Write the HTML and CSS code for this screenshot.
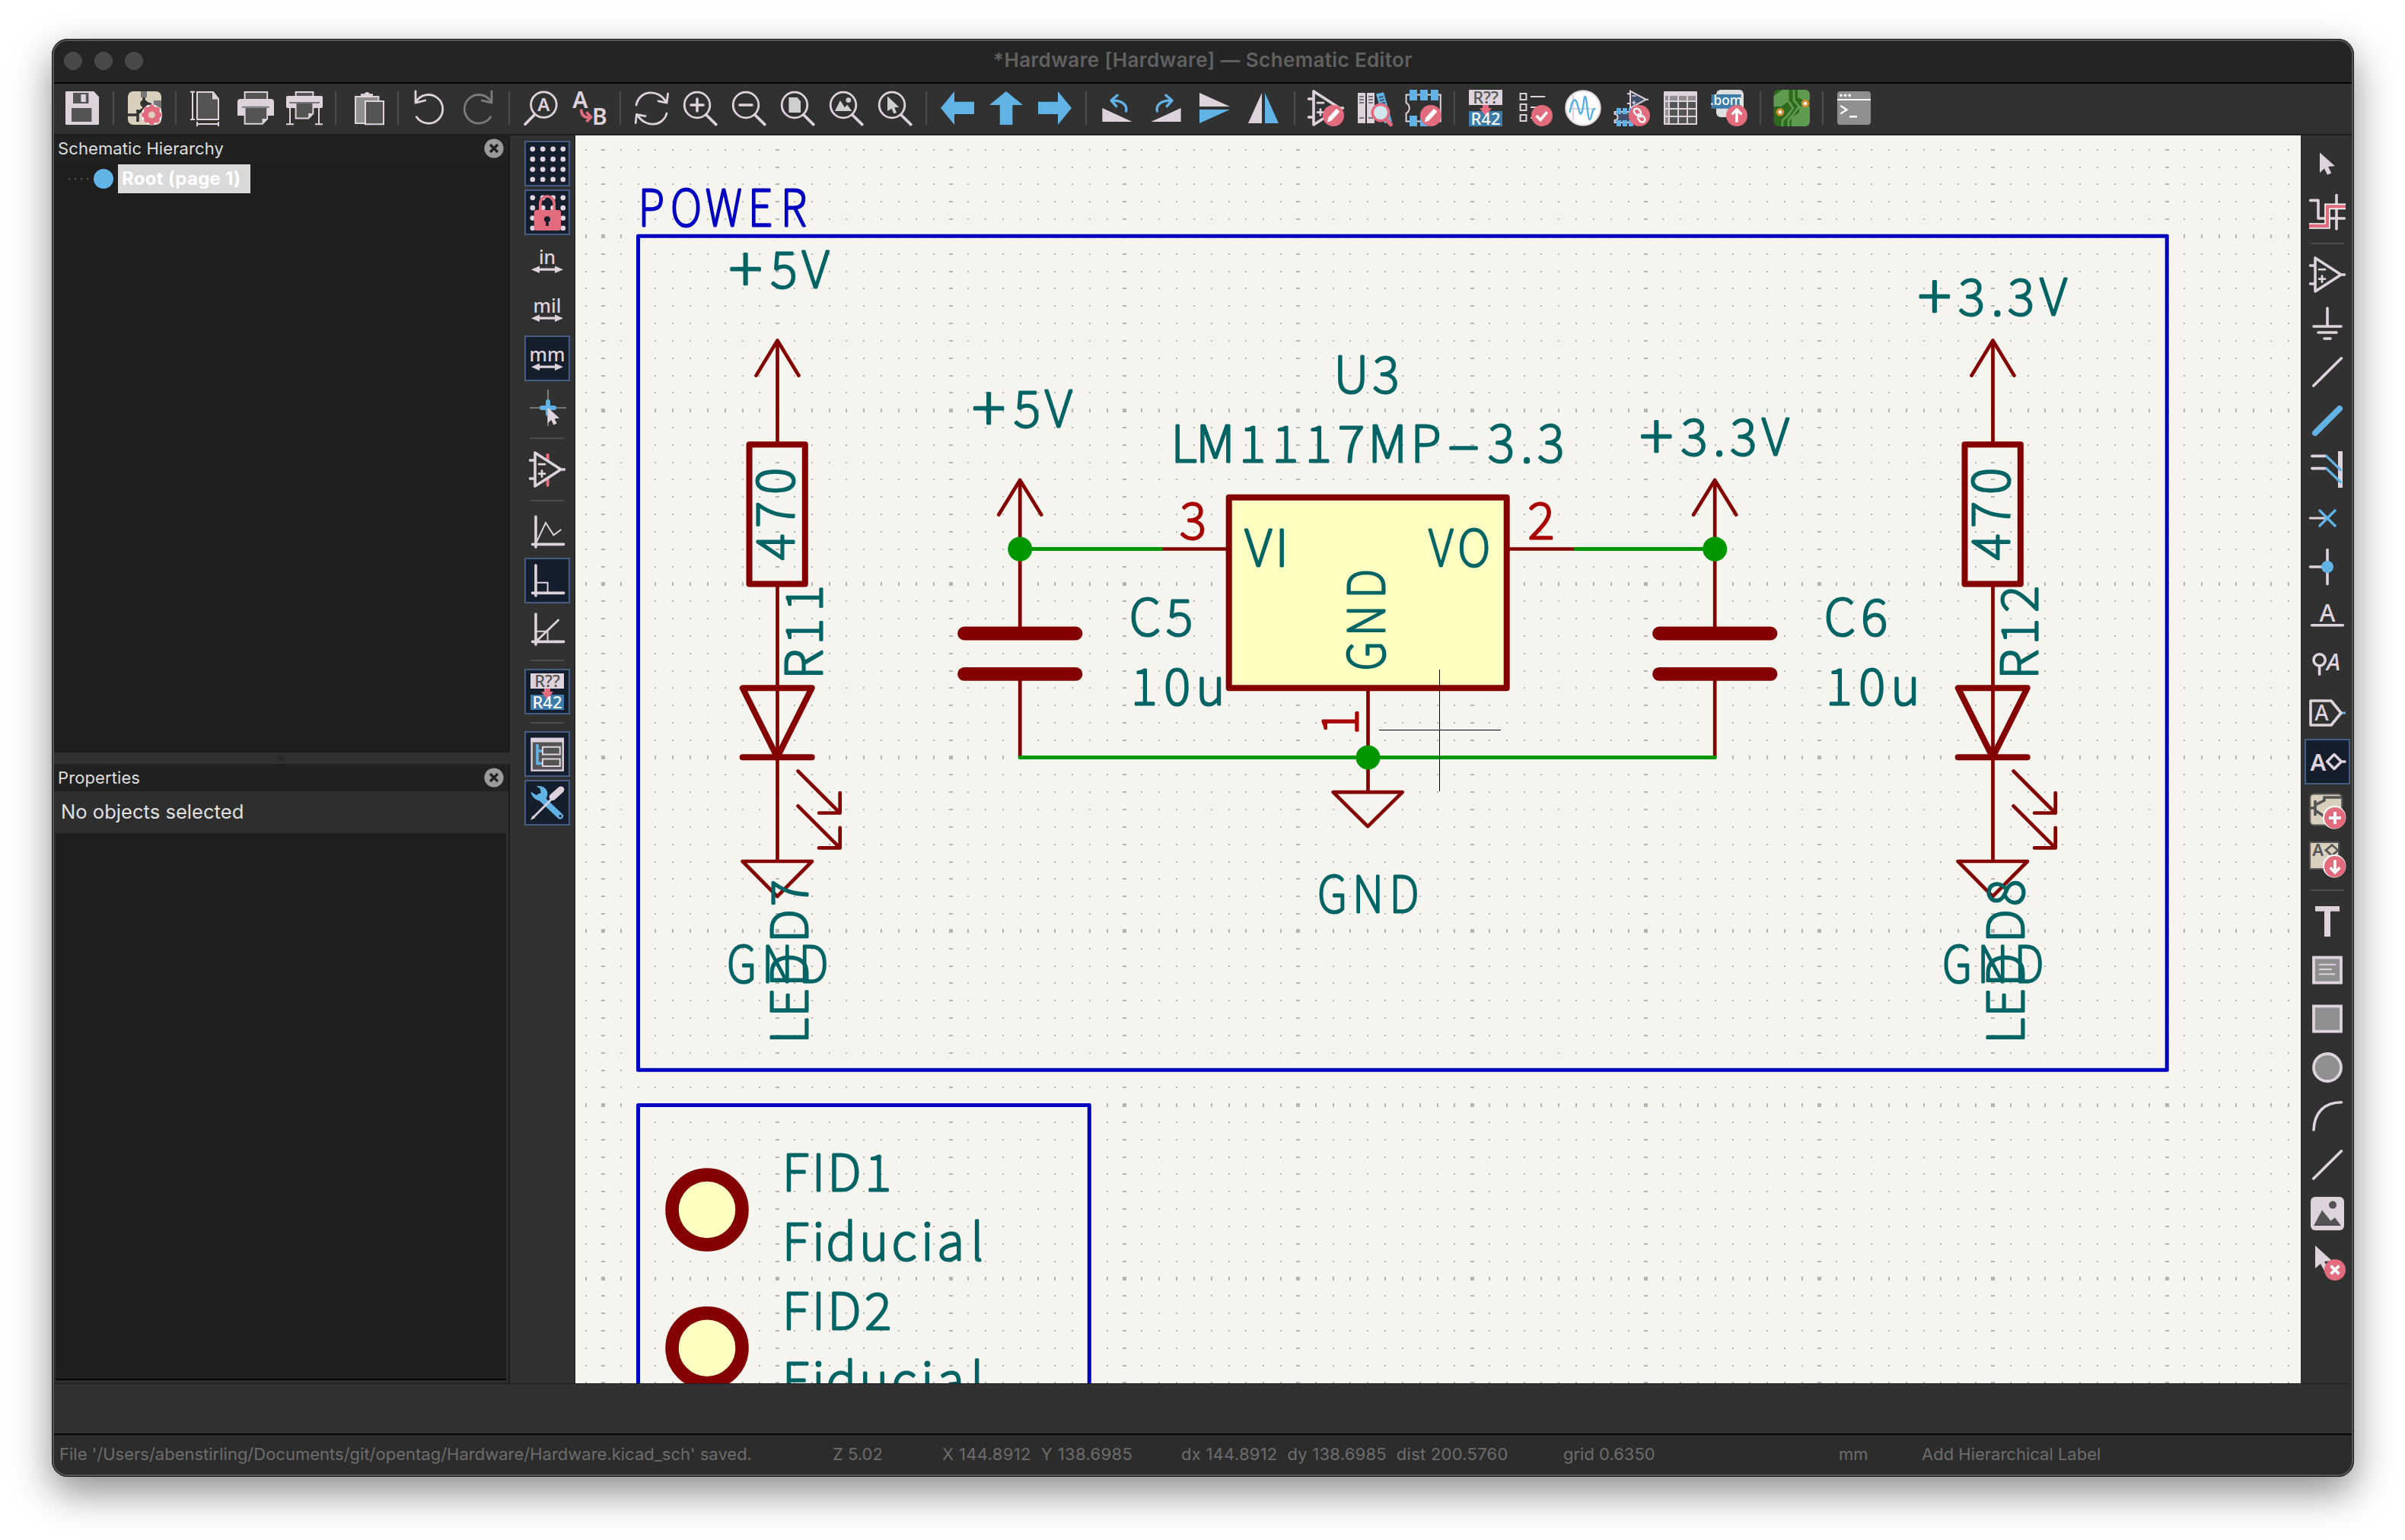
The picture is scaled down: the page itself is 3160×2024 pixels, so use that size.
FILE: index.html
```html
<!DOCTYPE html>
<html lang="en">
<head>
<meta charset="utf-8">
<title>Schematic Editor</title>
<link rel="stylesheet" href="styles.css">
</head>
<body>
<svg class="defs" width="0" height="0">
  <symbol id="opamp" viewBox="0 0 24 24"><path class="ln2" d="M4 1V23L21 12ZM.8 6H4M.8 18H4M20 12h3.2"/><path class="ln1" d="M6.5 8.6h4M6.5 14.8h4M8.5 12.8v4"/></symbol>
  <symbol id="lens" viewBox="0 0 24 24"><circle class="ln1" cx="10" cy="10" r="8.4"/><path class="ln2" d="M16 16.5 22.4 22.8"/></symbol>
  <symbol id="badge" viewBox="0 0 24 24"><circle class="red" cx="17" cy="17" r="7"/></symbol>
  <symbol id="pencil" viewBox="0 0 24 24"><circle class="red" cx="17" cy="17" r="7"/><path class="white" d="M13 21.3l.6-3L19 12.4l2.2 2L15.8 20.2z"/></symbol>
  <symbol id="dots" viewBox="0 0 24 24"><g class="light"><circle cx="2.4" cy="2.4" r="1.7"/><circle cx="9.1" cy="2.4" r="1.7"/><circle cx="15.8" cy="2.4" r="1.7"/><circle cx="22.4" cy="2.4" r="1.7"/><circle cx="2.4" cy="9.1" r="1.7"/><circle cx="9.1" cy="9.1" r="1.7"/><circle cx="15.8" cy="9.1" r="1.7"/><circle cx="22.4" cy="9.1" r="1.7"/><circle cx="2.4" cy="15.8" r="1.7"/><circle cx="9.1" cy="15.8" r="1.7"/><circle cx="15.8" cy="15.8" r="1.7"/><circle cx="22.4" cy="15.8" r="1.7"/><circle cx="2.4" cy="22.4" r="1.7"/><circle cx="9.1" cy="22.4" r="1.7"/><circle cx="15.8" cy="22.4" r="1.7"/><circle cx="22.4" cy="22.4" r="1.7"/></g></symbol>
  <symbol id="dim" viewBox="0 0 24 24"><path class="light" d="M1.5 17.6l5.5-2.4v1.6h10v-1.6l5.5 2.4-5.500 2.400V18.400H7V20z"/></symbol>
  <symbol id="close" viewBox="0 0 26 26"><circle cx="13" cy="13" r="12.6" fill="#9b9b9b"/><path d="M8 8l10 10M18 8L8 18" stroke="#212121" stroke-width="3.4"/></symbol>
</svg>

<div class="window">
  <header class="titlebar">
    <div class="lights"><i></i><i></i><i></i></div>
    <h1>*Hardware [Hardware] — Schematic Editor</h1>
  </header>

  <nav class="toolbar">
    <span class="btn"><svg viewBox="0 0 24 24"><path class="light" d="M1.6 1H19.6L23 4.6V22.4a.6.6 0 0 1-.6.6H1.6a.6.6 0 0 1-.6-.6V1.6a.6.6 0 0 1 .6-.6z"/><path class="dark" d="M6 2h10.2v7H6zM5 12h13.2v9H5z"/><path class="light" d="M11.2 3h3.2v5h-3.2z"/></svg></span>
    <i class="sep"></i>
    <span class="btn"><svg viewBox="0 0 24 24"><rect class="beige" x="1" y="1" width="22" height="22" rx="3.5"/><path d="M9.5 1h4v4h-4zM18 7h5v5h-5z" fill="#777"/><path d="M11.5 5v8M11.5 8l5 2M1 16.5h6M7.5 13v8M8 15l4-3" fill="none" stroke="#333" stroke-width="1.8"/><circle cx="11.5" cy="9" r="2.4" fill="#333"/><g stroke="#fff" stroke-width="4.4" stroke-linejoin="round"><circle cx="16.7" cy="16.5" r="4.6" fill="none"/><path d="M16.7 10.5v12M10.7 16.5h12M12.5 12.3l8.4 8.4M20.9 12.3l-8.4 8.4" stroke-width="3.4"/></g><g stroke="#e26b7d"><circle cx="16.7" cy="16.5" r="4" fill="#d9cfbd" stroke-width="3.4"/><path d="M16.7 10v2.6M16.7 20.4v2.6M10.2 16.5h2.6M20.6 16.5h2.6M12.1 11.9l1.8 1.8M19.5 19.3l1.8 1.8M21.3 11.9l-1.8 1.8M13.9 19.3l-1.8 1.8" stroke-width="2.8"/></g></svg></span>
    <i class="sep"></i>
    <span class="btn"><svg viewBox="0 0 24 24"><path d="M5.5 1.5H16L19.5 6V19.5H5.5z" fill="#545454" stroke="#ded3dd"/><path class="light" d="M15.5 1.5V6.3H19.7z"/><path class="ln" d="M1 1.4h3M2.5 1.4v18M1 19.5h3M5.5 22.5h14M5.5 21v3M19.5 21v3"/></svg></span>
    <span class="btn"><svg viewBox="0 0 24 24"><path d="M4.8 1.5h14.8V8H4.8z" fill="#545454" stroke="#ded3dd"/><path class="light" d="M2 6h20a2 2 0 0 1 2 2v9H0V8a2 2 0 0 1 2-2z"/><path d="M4.8 11.5h14.8v7.5l-3.2 3.4H4.8z" fill="#545454" stroke="#ded3dd"/><path d="M3 11.4h18" stroke="#777"/><path class="light" d="M16.2 19h3.6l-3.4 3.5z"/></svg></span>
    <span class="btn"><svg viewBox="0 0 24 24"><path d="M6.3 1.5h11.4V6H6.3z" fill="#545454" stroke="#ded3dd"/><rect class="light" y="4" width="24" height="8" rx="1"/><path d="M6.3 8.5h11.4v7l-3 3.2H6.3z" fill="#545454" stroke="#ded3dd"/><path d="M2 8.5h20" stroke="#777"/><path class="light" d="M14.5 15.5H18l-3.3 3.4z"/><path class="ln" d="M2.5 12v11M21.5 12v11M0 22.6h5M19 22.6h5"/></svg></span>
    <i class="sep"></i>
    <span class="btn"><svg viewBox="0 0 24 24"><path d="M4.5 4.5h15.2V22H4.5z" fill="#8f8f8f" stroke="#ded3dd"/><path class="light" d="M8 5V2.6h2.3a2 2 0 0 1 3.6 0H16V5z"/><path d="M11 7.5h12V22.6H11z" fill="#545454" stroke="#ded3dd"/></svg></span>
    <i class="sep"></i>
    <span class="btn"><svg viewBox="0 0 24 24"><path class="ln1" d="M3 .9V8.600L9.400 7M3.200 8.200A9.400 9.400 0 1 1 3.600 17.800"/></svg></span>
    <span class="btn off"><svg viewBox="0 0 24 24"><path class="ln1" d="M21 .9V8.600L14.600 7M20.800 8.200A9.400 9.400 0 1 0 20.400 17.800"/></svg></span>
    <i class="sep"></i>
    <span class="btn"><svg viewBox="0 0 24 24"><circle class="ln1" cx="14.2" cy="9.8" r="8.4"/><path class="ln2" d="M8.3 16.2 2 22.6"/><text class="ic b" x="14.2" y="14" font-size="12">A</text></svg></span>
    <span class="btn"><svg viewBox="0 0 24 24"><text class="ic b" x="6.2" y="12" font-size="15">A</text><text class="ic b" x="19" y="23" font-size="15">B</text><path d="M6.8 12.8c0 3.6 1.6 5.4 5 5.4M10.3 14.6l3 3.4-3 3" fill="none" stroke="#e26b7d" stroke-width="1.8"/></svg></span>
    <i class="sep"></i>
    <span class="btn"><svg viewBox="0 0 24 24"><path class="ln1" d="M2 10C4 .2 16.5-1 21.5 8M22.8 2.6 22 8.6 16.5 7.4M22 15.5C19.5 24.5 7.5 25 2.8 16.5M1.6 21.8 2.2 16.2 8 17.3"/></svg></span>
    <span class="btn"><svg viewBox="0 0 24 24"><use href="#lens"/><path class="ln2" d="M6 10h8M10 6v8"/></svg></span>
    <span class="btn"><svg viewBox="0 0 24 24"><use href="#lens"/><path class="ln2" d="M6 10h8"/></svg></span>
    <span class="btn"><svg viewBox="0 0 24 24"><use href="#lens"/><path fill="#cfcfcf" d="M6.2 5h5.6L14 7.6V15H6.2z"/></svg></span>
    <span class="btn"><svg viewBox="0 0 24 24"><use href="#lens"/><path fill="#cfcfcf" d="M4.5 14 8 7l3 4.6 1.6-1.8 3 4.2z"/><circle cx="13.4" cy="6.8" r="1.7" fill="#cfcfcf"/></svg></span>
    <span class="btn"><svg viewBox="0 0 24 24"><use href="#lens"/><path fill="#cfcfcf" d="M7 4.2 14.6 11.4 11.6 11.6 13 15 11.2 15.8 9.8 12.4 7 14z"/></svg></span>
    <i class="sep"></i>
    <span class="btn"><svg viewBox="0 0 24 24"><path class="blue" d="M1 12 10 1V7.9H23V16H10V23z"/></svg></span>
    <span class="btn"><svg viewBox="0 0 24 24"><path class="blue" d="M12 1 23 10H16.2V23H7.9V10H1z"/></svg></span>
    <span class="btn"><svg viewBox="0 0 24 24"><path class="blue" d="M23 12 14 1V7.9H1V16H14V23z"/></svg></span>
    <i class="sep"></i>
    <span class="btn"><svg viewBox="0 0 24 24"><path class="light" d="M2.2 12 21.8 21H2.2z"/><path class="bl2" d="M17.8 14C18.6 9.5 14.8 7 8.4 7M12 3.6 8 7l3.4 3.8"/></svg></span>
    <span class="btn"><svg viewBox="0 0 24 24"><path class="light" d="M21.8 12 2.2 21H21.8z"/><path class="bl2" d="M6.2 14C5.4 9.5 9.2 7 15.6 7M12 3.6 16 7l-3.4 3.8"/></svg></span>
    <span class="btn"><svg viewBox="0 0 24 24"><path class="light" d="M2 2 22 11H2z"/><path class="blue" d="M2 13H22L2 22z"/></svg></span>
    <span class="btn"><svg viewBox="0 0 24 24"><path class="light" d="M2 22 11 2V22z"/><path class="blue" d="M13 2 22 22H13z"/></svg></span>
    <i class="sep"></i>
    <span class="btn"><svg viewBox="0 0 24 24"><use href="#opamp"/><use href="#pencil"/></svg></span>
    <span class="btn"><svg viewBox="0 0 24 24"><path class="light" d="M1 2h5v20H1zM7 2h5v20H7z"/><path d="M2 4.5h3M2 6.5h3M2 8.5h3M2 18.5h3M8 4.5h3M8 6.5h3M8 8.5h3M8 18.5h3" stroke="#777"/><path class="blue" d="M13 2.8 18 1.6 23.5 21 18.5 22z"/><path d="M14.8 5.2l3-.8M15.4 7.2l3-.8M16 9.2l3-.8" stroke="#41506b"/><path d="M20 19.8 22.7 22.8" stroke="#e26b7d" stroke-width="2.6" stroke-linecap="round"/><circle cx="16" cy="15" r="5.4" fill="#cfe6ec" stroke="#e26b7d" stroke-width="1.7"/></svg></span>
    <span class="btn"><svg viewBox="0 0 24 24"><path class="ln" d="M.8 3.3H23.4V20.7H.8V15.5A4 4 0 0 0 .8 8.5z"/><path class="blue" d="M3 0h5v7H3zM10 0h5v7h-5zM17 0h5v7h-5zM3 17h5v7H3zM10 17h5v7h-5z"/><use href="#pencil"/></svg></span>
    <i class="sep"></i>
    <span class="btn"><svg viewBox="0 0 24 24"><path class="light" d="M1 0h22v10H1z"/><path fill="#3b7cab" d="M1 14h22v10H1z"/><text class="ic" x="12" y="9" font-size="11" fill="#545454">R??</text><path class="red" d="M10 10h4v2h2L12 17.4 8 12h2z"/><text class="ic w" x="12" y="23" font-size="11">R42</text></svg></span>
    <span class="btn"><svg viewBox="0 0 24 24"><path class="ln" d="M2.8 2.5H6.7V6.5H2.8zM2.8 9.5H6.7v4H2.8zM2.8 16.5H6.7v4H2.8zM9.5 4.5h9.6M9.5 11.5h5M9.5 18.5h3"/><use href="#badge"/><path d="M13.4 17l2.6 2.8 4.4-5.2" fill="none" stroke="#fff" stroke-width="1.8"/></svg></span>
    <span class="btn"><svg viewBox="0 0 24 24"><circle cx="12" cy="12" r="11.4" fill="#fff" stroke="#ded3dd"/><path d="M5.5 3.5v16.5M3 12.5h17" stroke="#ded3dd"/><path d="M3.4 14.5C5 5 7.2 5 8.4 10s2 8.500 3.300 3 .600-8.500 1.700-8.500 1.600 15 3 15 1.300-7.500 3.400-7" fill="none" stroke="#55b0e6" stroke-width="1.200" stroke-linecap="round"/></svg></span>
    <span class="btn"><svg viewBox="0 0 24 24"><path d="M11 .8V12L21.400 6.400zM9 2.600h2M9 9h2M21 6.400h2" fill="#41506b" stroke="#ded3dd"/><path d="M12.200 4h2.500M12.200 8.500h2.500M13.400 7.300v2.400" stroke="#ded3dd" stroke-width=".8"/><path d="M.8 14.500H13V21.500H.8v-1.500a2 2 0 0 0 0-4z" fill="#41506b" stroke="#ded3dd"/><path class="blue" d="M2 12h3v4H2zM6 12h3v4H6zM10 12h3v4h-3zM2 20h3v4H2zM6 20h3v4H6zM10 20h3v4h-3z"/><use href="#badge"/><g fill="none" stroke="#fff" stroke-width="1.200"><rect x="13.200" y="12.800" width="5" height="3.600" rx="1.800" transform="rotate(45 15.700 14.600)"/><rect x="15.900" y="17.200" width="5" height="3.600" rx="1.800" transform="rotate(45 18.400 19)"/><path d="M16 15.600l2.200 2.600"/></g></svg></span>
    <span class="btn"><svg viewBox="0 0 24 24"><rect class="light" x="1" y="1" width="22" height="22" rx=".5"/><path d="M2 4h2v3H2zM5 4h5v3H5zM11 4h5v3h-5zM17 4h5v3h-5zM2 8h2v4H2zM2 13h2v4H2zM2 18h2v4H2z" fill="#8f8f8f"/><path class="dark" d="M5 8h5v4H5zM11 8h5v4h-5zM17 8h5v4h-5zM5 13h5v4H5zM11 13h5v4h-5zM17 13h5v4h-5zM5 18h5v4H5zM11 18h5v4h-5zM17 18h5v4h-5z"/></svg></span>
    <span class="btn"><svg viewBox="0 0 24 24"><rect x="3.500" y="0" width="18" height="18" rx="3" fill="#e0dfe0"/><path fill="#3b7cab" d="M.3 3H19.800V12.400H.3z"/><text class="ic w" x="10" y="10.200" font-size="8.600">.bom</text><use href="#badge"/><path d="M17 21.400v-8M13.800 16.200 17 13l3.200 3.200" fill="none" stroke="#fff" stroke-width="1.700"/></svg></span>
    <i class="sep"></i>
    <span class="btn"><svg viewBox="0 0 24 24"><rect x=".3" y="0" width="23.700" height="24" rx="3" fill="#2d6a1c"/><path d="M16 0h5a3 3 0 0 1 3 3v4h-4l-4-2zM17 11h7v10a3 3 0 0 1-3 3H12v-6l5-3zM.3 4v7h5l4-3V0H6z" fill="#5e9a50"/><path d="M9.500 0v7L13 12 9 17.500 6 20v4M13.500 0v7l3.500 4-7 9v4" fill="none" stroke="#5e9a50" stroke-width="1.400"/><circle cx="21" cy="9" r="1.900" fill="#fff" stroke="#d28d33" stroke-width="1.500"/><circle cx="4.500" cy="14.600" r="1.900" fill="#fff" stroke="#d28d33" stroke-width="1.500"/></svg></span>
    <i class="sep"></i>
    <span class="btn"><svg viewBox="0 0 24 24"><rect x="1" y="1" width="22" height="22" rx="2" fill="#8f8f8f"/><path d="M1 6.500h22" stroke="#fff" stroke-width="1"/><g fill="#fff"><circle cx="3.500" cy="3.700" r=".9"/><circle cx="6.300" cy="3.700" r=".9"/><circle cx="9.100" cy="3.700" r=".9"/></g><path d="M3.200 10.500l4 2.600-4 2.600M9 17.600h5" fill="none" stroke="#fff" stroke-width="1.200"/></svg></span>
  </nav>

  <main class="main">
    <aside class="side">
      <section class="panel hierarchy">
        <h2>Schematic Hierarchy<svg><use href="#close"/></svg></h2>
        <div class="tree"><span class="branch"></span><span class="node"></span><b>Root (page 1)</b></div>
      </section>
      <div class="sash"><i></i></div>
      <section class="panel props">
        <h2>Properties<svg><use href="#close"/></svg></h2>
        <p>No objects selected</p>
        <div class="box"></div>
      </section>
    </aside>

    <nav class="rail left">
      <span class="btn on"><svg viewBox="0 0 24 24"><use href="#dots"/></svg></span>
      <span class="btn on"><svg viewBox="0 0 24 24"><use href="#dots"/><path d="M7.400 11V6.500a4.600 5 0 0 1 9.200 0V11" fill="none" stroke="#e26b7d" stroke-width="1.800"/><rect class="red" x="3.400" y="10.500" width="17.600" height="13.500" rx="1.500"/><path fill="#151e2d" d="M12 14.600a2 2 0 0 1 .9 3.800V21h-1.800v-2.600a2 2 0 0 1 .9-3.800z"/></svg></span>
      <span class="btn"><svg viewBox="0 0 24 24"><text class="ic" x="12" y="14" font-size="12.400">in</text><use href="#dim"/></svg></span>
      <span class="btn"><svg viewBox="0 0 24 24"><text class="ic" x="12" y="14" font-size="12.400">mil</text><use href="#dim"/></svg></span>
      <span class="btn on"><svg viewBox="0 0 24 24"><text class="ic" x="12" y="14" font-size="12.400">mm</text><use href="#dim"/></svg></span>
      <span class="btn"><svg viewBox="0 0 24 24"><path d="M.5 12.500h24M12.500.5v24" stroke="#8f8f8f" stroke-width=".8"/><path d="M8.500 12.500h8M12.500 8.500v8" stroke="#62b3e5" stroke-width="3" stroke-linecap="round"/><path class="light" d="M12.300 12.300 20 19.200 16.800 19.600 18.300 22.800 16.200 23.800 14.600 20.400 12.300 22.800z"/></svg></span>
      <i class="sep"></i>
      <span class="btn"><svg viewBox="0 0 24 24"><path d="M12.300 2.400v20" stroke="#e26b7d" stroke-width="2" stroke-linecap="round"/><path d="M4 1V23L21 12z" fill="#313131"/><use href="#opamp"/></svg></span>
      <i class="sep"></i>
      <span class="btn"><svg viewBox="0 0 24 24"><path class="ln2" d="M4.500 2v20M2.300 20.200h20.500"/><path class="ln" d="M5 18.700 11 6l5.200 8.200 5-3.700"/></svg></span>
      <span class="btn on"><svg viewBox="0 0 24 24"><path class="ln2" d="M4.500 2v20M2.300 20.200h20.500"/><path class="ln" d="M5 13.400h7.300v7"/></svg></span>
      <span class="btn"><svg viewBox="0 0 24 24"><path class="ln2" d="M4.500 2v20M2.300 20.200h20.500"/><path class="ln" d="M5 13.400h7.300v7"/><path class="ln1" d="M5 19.700 19.300 6"/></svg></span>
      <i class="sep"></i>
      <span class="btn on"><svg viewBox="0 0 24 24"><path class="light" d="M1 0h22v10H1z"/><path fill="#3b7cab" d="M1 14h22v10H1z"/><text class="ic" x="12" y="9" font-size="11" fill="#545454">R??</text><path class="red" d="M10 10h4v2h2L12 17.400 8 12h2z"/><text class="ic w" x="12" y="23" font-size="11">R42</text></svg></span>
      <i class="sep"></i>
      <span class="btn on"><svg viewBox="0 0 24 24"><path d="M1.800 2h20.600v20.800H1.800z" fill="#545454" stroke="#ded3dd" stroke-width="1.200"/><path class="light" d="M1.200 1.400h21.800v2.800H1.200z"/><path d="M5.500 5.500v12.700H9M5.500 10H9" fill="none" stroke="#62b3e5" stroke-width="1.800"/><path class="ln" d="M9 7.400h11.400v4.800H9zM9 15.200h11.400V20H9z"/></svg></span>
      <span class="btn on"><svg viewBox="0 0 24 24"><path d="M7 8 20.500 20.800" stroke="#62b3e5" stroke-width="4" stroke-linecap="round"/><path class="blue" d="M1.200 4.800l4 2.400 2.600-1.400-.4-3L5 1.200c3.500-1 7 1.200 7.200 4.600.1 2-.6 3.200-1.800 4.200-2.600 2-8.200.3-9.200-5.200z"/><circle cx="20.600" cy="20.800" r=".9" fill="#151e2d"/><path class="ln1" d="M15 9.500 3.500 21"/><path class="light" d="M1 23.400l1.500-3 1.600 1.600z"/><path d="M15.500 8.300 21 3.400" stroke="#ded3dd" stroke-width="4.400" stroke-linecap="round"/></svg></span>
    </nav>

    <svg class="canvas" viewBox="756 178 2267 1640">
      <path id="grid" class="grid"/>
      <g class="note"><path d="M838.500 310.300H2847.200V1406.300H838.500zM838.500 1452.500H1431.300V1900H838.500z"/></g>
      <g id="branch" class="sym">
        <path d="M1021.500 447.500V584M993.500 493.600l28-46.100 28 46.100M1021.500 768V1132M1048.600 1013.500l55 55M1103.700 1042v26.500h-27.600M1048.600 1059.300l55 55M1103.700 1087.900v26.500h-27.600M975.600 1132h91.400l-45.700 46.200z"/>
        <path class="thick" d="M984.500 584.200h73.300v183.400h-73.300zM975.700 904.300h91l-45.500 91zM975.700 995.300h91"/>
      </g>
      <use href="#branch" x="1597"/>
      <g id="cap" class="sym">
        <path d="M1340.200 631V832M1340.200 886V995M1312.200 676.600l28-45.600 28 45.600"/>
        <path class="plate" d="M1267 832.500h146.500M1267 885.900h146.500"/>
      </g>
      <use href="#cap" x="913"/>
      <g class="sym"><path d="M1525 721.500h90M1980 721.500h91M1797.500 904V1041M1751.700 1041.200h91l-45.500 45z"/><path class="thick body" d="M1614.700 653.700h365v250.500h-365z"/>
        <circle class="body ring" cx="929" cy="1590" r="46"/><circle class="body ring" cx="929" cy="1771.700" r="46"/></g>
      <path class="wire" d="M1340.200 721.500H1525.500M2070.500 721.500H2253.200M1340.200 995.400H2253.200"/>
      <g class="dot"><circle cx="1340.200" cy="721.600" r="16"/><circle cx="2253.200" cy="721.600" r="16"/><circle cx="1797.500" cy="995.500" r="16"/></g>

      <g class="stroke note-t"><text transform="scale(.86 1)" y="297" x="995 1048.400 1105.800 1161.600 1212.500">POWER</text></g>
      <g class="stroke ref">
        <text y="378.100" x="979.700 1029.900 1071.500"><tspan class="plus" dy="6">+</tspan><tspan dy="-6">5</tspan>V</text>
        <text y="560.600" x="1299.100 1349.400 1390.700"><tspan class="plus" dy="6">+</tspan><tspan dy="-6">5</tspan>V</text>
        <text y="597.800" x="2176.500 2226 2259.200 2290.800 2332.700"><tspan class="plus" dy="6">+</tspan><tspan dy="-6">3</tspan>.3V</text>
        <text y="413.900" x="2542 2590.400 2624.300 2655.500 2698"><tspan class="plus" dy="6">+</tspan><tspan dy="-6">3</tspan>.3V</text>
        <text y="515.700" x="1775.500 1820.900">U3</text>
        <text y="606.700" x="1555.500 1596.800 1645.500 1688.800 1732.100 1775.500 1823.200 1873.500">LM1117MP</text>
        <text transform="translate(1923 606.700) scale(2 1)" x="0">-</text>
        <text y="606.700" x="1972.400 2006.100 2037.800">3.3</text>
        <text y="743.700" x="1653.300 1684.200">VI</text>
        <text transform="translate(1915 743.700) scale(.9 1)" x="-24 24">VO</text>
        <text transform="rotate(-90) translate(-815 1819.400) scale(.88 1)" x="-53.800 -1 54.300">GND</text>
        <text transform="translate(1797.400 1199.200) scale(.88 1)" x="-53.300 0 54">GND</text>
        <text y="834.500" x="1504.400 1549.700">C5</text>
        <text y="926.300" x="1503.200 1546.800 1590.500">10u</text>
        <text y="834.500" x="2417.400 2462.700">C6</text>
        <text y="926.300" x="2416.200 2459.800 2503.500">10u</text>
        <text transform="rotate(-90)" y="1042.500" x="-718.900 -676.400 -632.200">470</text>
        <text transform="rotate(-90)" y="1079.800" x="-873.300 -830.200 -786.600">R11</text>
        <text transform="rotate(-90)" y="1061.400" x="-1355 -1318 -1275">LED</text>
        <text transform="rotate(-90)" y="1061.400" x="-1217.200 -1173.600">D7</text>
        <text transform="translate(1021.400 1290.800) scale(.88 1)" x="-53.300 0 54">GND</text>
        <text transform="rotate(-90)" y="2640" x="-718.900 -676.400 -632.200">470</text>
        <text transform="rotate(-90)" y="2677.200" x="-873.300 -830.200 -787.200">R12</text>
        <text transform="rotate(-90)" y="2659" x="-1355 -1318 -1275">LED</text>
        <text transform="rotate(-90)" y="2659" x="-1217.200 -1173.300">D8</text>
        <text transform="translate(2618.400 1290.800) scale(.88 1)" x="-53.300 0 54">GND</text>
        <text y="1565.200" x="1045 1075.400 1109.400 1153.600">FID1</text>
        <text y="1656.300" x="1045 1075.400 1105.400 1148.200 1188 1218.300 1249.100 1284">Fiducial</text>
        <text y="1747.400" x="1045 1075.400 1109.400 1153.600">FID2</text>
        <text y="1838.700" x="1045 1075.400 1105.400 1148.200 1188 1218.300 1249.100 1284">Fiducial</text>
      </g>
      <g class="stroke pin">
        <text y="707.600" x="1567.500">3</text><text y="707.600" x="2025">2</text>
        <text transform="rotate(-90)" y="1783.700" x="-949.200">1</text>
      </g>
      <path class="cursor" d="M1812 959.500h160M1891.500 880v160"/>
    </svg>

    <nav class="rail right">
      <span class="btn"><svg viewBox="0 0 24 24"><path class="light" d="M7 4.700 17 13.600 12.600 14l2 4.200-2.600 1.200-2-4.200L7 18z"/></svg></span>
      <span class="btn"><svg viewBox="0 0 24 24"><path class="ln2" d="M.8 4.200H6V16H23.200M18 .8V23"/><path d="M0 21H12V8.200H24" fill="none" stroke="#fff" stroke-width="3.800"/><path d="M0 21H12V8.200H24" fill="none" stroke="#e26b7d" stroke-width="2.200"/></svg></span>
      <i class="sep"></i>
      <span class="btn"><svg viewBox="0 0 24 24"><use href="#opamp"/></svg></span>
      <span class="btn"><svg viewBox="0 0 24 24"><path class="ln2" d="M12 2v12M3 14h18M6 18h12M10 22h4"/></svg></span>
      <span class="btn"><svg viewBox="0 0 24 24"><path class="ln2" d="M2.900 21 21.200 2.900"/></svg></span>
      <span class="btn"><svg viewBox="0 0 24 24"><path d="M4 20 20 4" stroke="#62b3e5" stroke-width="4" stroke-linecap="round"/></svg></span>
      <span class="btn"><svg viewBox="0 0 24 24"><path class="light" d="M19 0h3v24h-3z"/><path class="ln2" d="M1.900 3.200H11M1.900 11.300H11"/><path class="bl2" d="M11.300 3.200 20.700 12.300M11.300 11.300 20.700 20.400"/></svg></span>
      <span class="btn"><svg viewBox="0 0 24 24"><path class="ln1" d="M.6 12H12"/><path class="bl2" d="M7 7l10 10M17 7 7 17"/></svg></span>
      <span class="btn"><svg viewBox="0 0 24 24"><path class="ln2" d="M.8 12H12M12 .8V23.200"/><circle class="blue" cx="12" cy="12" r="4"/></svg></span>
      <span class="btn"><svg viewBox="0 0 24 24"><text class="ic" x="12" y="16" font-size="16">A</text><path class="ln2" d="M1.800 18.400H22.200"/></svg></span>
      <span class="btn"><svg viewBox="0 0 24 24"><circle class="ln2" cx="6.800" cy="9.200" r="3.800"/><path class="ln2" d="M6.800 13v5.600"/><text class="ic i" x="16" y="16" font-size="15.500">A</text></svg></span>
      <span class="btn"><svg viewBox="0 0 24 24"><path d="M20 12h4" stroke="#62b3e5" stroke-width="1.500"/><path class="ln2" d="M1 4H14.500L21 12 14.500 20H1z"/><text class="ic" x="8.200" y="17" font-size="14">A</text></svg></span>
      <span class="btn on"><svg viewBox="0 0 24 24"><text class="ic b" x="6" y="18" font-size="15.500">A</text><path class="ln2" d="M11.800 12 16.500 7.300 21.200 12 16.500 16.700zM21 12h2.500"/></svg></span>
      <span class="btn"><svg viewBox="0 0 24 24"><rect class="beige" x=".6" y="1.300" width="21" height="20.500" rx="2.500" stroke="#545454"/><path d="M1 10.500h3.500M4 5.500v10M4 8.500 10 5.500H10V3.500H21.500M4 12l6 4h5" fill="none" stroke="#545454" stroke-width="1.800"/><circle cx="16.600" cy="16.600" r="7.600" fill="#fff"/><use href="#badge"/><path d="M13 17h8M17 13v8" stroke="#fff" stroke-width="2"/></svg></span>
      <span class="btn"><svg viewBox="0 0 24 24"><path class="beige" d="M.5 1h19v17.500H.5z" stroke="#545454"/><text class="ic b" x="5.800" y="10.200" font-size="11" fill="#545454">A</text><path d="M11 6.300 15 2.800 19 6.300 15 9.800z" fill="none" stroke="#545454" stroke-width="1.300"/><circle cx="16.600" cy="16.600" r="7.600" fill="#fff"/><use href="#badge"/><path d="M17 12.600v8M13.800 17.600 17 20.800l3.200-3.200" fill="none" stroke="#fff" stroke-width="1.800"/></svg></span>
      <i class="sep"></i>
      <span class="btn"><svg viewBox="0 0 24 24"><path class="light" d="M4 2h16v3.400h-6V22h-4V5.400H4z"/></svg></span>
      <span class="btn"><svg viewBox="0 0 24 24"><rect x="3" y="3.700" width="18" height="16.600" fill="#8f8f8f" stroke="#ded3dd" stroke-width="1.900"/><path class="ln" d="M6.500 8.400h11M6.500 11.500h8.500M6.500 14.600h10.500"/></svg></span>
      <span class="btn"><svg viewBox="0 0 24 24"><rect x="3" y="3.700" width="18" height="16.600" fill="#8f8f8f" stroke="#ded3dd" stroke-width="1.900"/></svg></span>
      <span class="btn"><svg viewBox="0 0 24 24"><circle cx="12" cy="12" r="9" fill="#8f8f8f" stroke="#ded3dd" stroke-width="1.900"/></svg></span>
      <span class="btn"><svg viewBox="0 0 24 24"><path class="ln2" d="M3 21C3.500 9.500 10 3 21.200 2.900"/></svg></span>
      <span class="btn"><svg viewBox="0 0 24 24"><path class="ln2" d="M2.900 21 21.200 2.900"/></svg></span>
      <span class="btn"><svg viewBox="0 0 24 24"><rect class="light" x="1" y="1" width="22" height="22" rx="3"/><circle class="dark" cx="15.500" cy="6.300" r="2.500"/><path class="dark" d="M3 20 8.500 9.800 14.200 16.800 17 14.600 21 20z"/></svg></span>
      <span class="btn"><svg viewBox="0 0 24 24"><path class="light" d="M4 1 15 11 10 11.500l3 5.500-2.500 1.500L7.500 13 4 16z"/><use href="#badge"/><path d="M14.300 14.300l5.400 5.400M19.700 14.300l-5.400 5.400" stroke="#fff" stroke-width="1.900"/></svg></span>
    </nav>
  </main>

  <div class="gap"></div>
  <footer class="status">
    <span class="s1">File '/Users/abenstirling/Documents/git/opentag/Hardware/Hardware.kicad_sch' saved.</span>
    <span class="s2">Z 5.02</span>
    <span class="s3">X 144.8912  Y 138.6985</span>
    <span class="s4">dx 144.8912  dy 138.6985  dist 200.5760</span>
    <span class="s5">grid 0.6350</span>
    <span class="s6">mm</span>
    <span class="s7">Add Hierarchical Label</span>
  </footer>
</div>
<script src="grid.js"></script>
</body>
</html>
```
FILE: styles.css
```css
* { box-sizing: border-box; }
body {
  margin: 0;
  padding: 51px 67px 0 68px;
  height: 2024px;
  overflow: hidden;
  background: #fff;
  font-family: Inter, "Liberation Sans", sans-serif;
}
.defs { position: absolute; }
.window {
  position: relative;
  display: flex;
  flex-direction: column;
  width: 3025px;
  height: 1890px;
  border-radius: 21px;
  overflow: hidden;
  background: #313131;
}
body::before {
  content: "";
  position: absolute;
  z-index: -1;
  left: 68px; top: 51px;
  width: 3025px; height: 1890px;
  border-radius: 21px;
  box-shadow: 0 20px 52px rgba(0, 0, 0, .46);
}
.window::after {
  content: "";
  position: absolute;
  inset: 0;
  border-radius: 21px;
  box-shadow: inset 0 0 0 1px #1c1c1c, inset 0 0 0 3px #555;
  pointer-events: none;
}

.titlebar {
  position: relative;
  flex: none;
  height: 59px;
  border-bottom: 2px solid #060606;
  background: #242424;
  display: flex;
  align-items: flex-start;
  justify-content: center;
}
.titlebar h1 {
  margin: 0;
  font-size: 26px;
  font-weight: 600;
  line-height: 55px;
  letter-spacing: .37px;
  color: #616161;
  white-space: nowrap;
}
.lights { position: absolute; left: 16px; top: 17px; display: flex; gap: 16px; }
.lights i { width: 24px; height: 24px; border-radius: 50%; background: #484848; }

.toolbar {
  flex: none;
  height: 68px;
  display: flex;
  align-items: center;
  padding: 0 8px 2px;
  border-bottom: 2px solid #1f1f1f;
}
.btn { flex: none; width: 60px; height: 60px; margin: 2px; display: flex; align-items: center; justify-content: center; }
.btn svg { flex: none; width: 48px; height: 48px; overflow: visible; }
.btn.on { background: #151e2d; border: 2px solid #435d85; }
.btn.off .ln1 { stroke: #7c7a7c; }
.toolbar .sep { flex: none; width: 2px; height: 44px; margin: 0 8px; background: #4c4c4c; }
.rail .sep { flex: none; width: 44px; height: 2px; margin: 8px 0; background: #4c4c4c; }

.light { fill: #ded3dd; }
.dark { fill: #545454; }
.blue { fill: #62b3e5; }
.red { fill: #e26b7d; }
.white { fill: #fff; }
.beige { fill: #d9cfbd; }
.ln, .ln1, .ln2 { fill: none; stroke: #ded3dd; }
.ln { stroke-width: 1; }
.ln1 { stroke-width: 1.400; stroke-linecap: round; stroke-linejoin: round; }
.ln2 { stroke-width: 1.800; stroke-linecap: round; stroke-linejoin: round; }
.bl2 { fill: none; stroke: #62b3e5; stroke-width: 1.700; stroke-linecap: round; stroke-linejoin: round; }
.ic { font-family: "Noto Sans", sans-serif; font-weight: 500; text-anchor: middle; }
.ic:not([fill]) { fill: #ded3dd; }
.ic.b { font-weight: 600; }
.ic.i { font-style: italic; }
.ic.w:not([fill]) { fill: #fff; }

.main { flex: none; height: 1640px; display: flex; }
.side { width: 602px; display: flex; flex-direction: column; }
.panel { border-right: 2px solid #1a1a1a; background: #1e1e1e; }
.panel h2 {
  margin: 0;
  height: 34px;
  padding: 0 6px 0 8px;
  display: flex;
  align-items: center;
  justify-content: space-between;
  background: #212121;
  color: #dedede;
  font-size: 22px;
  font-weight: 400;
  letter-spacing: .1px;
}
.panel h2 svg { width: 26px; height: 26px; }
.hierarchy { height: 811px; }
.tree { display: flex; align-items: center; padding: 4px 0 0 22px; }
.branch { width: 27px; height: 2px; background: repeating-linear-gradient(90deg, #5a5a5a 0 2px, transparent 2px 8px); }
.node { width: 26px; height: 26px; margin: 0 6px 0 6px; border-radius: 50%; background: #62b3e5; }
.tree b {
  width: 174px;
  height: 38px;
  padding-left: 5px;
  line-height: 38px;
  background: #d9d9d9;
  color: #fff;
  font-size: 24px;
  letter-spacing: .25px;
  white-space: nowrap;
}
.sash { height: 15px; display: flex; justify-content: center; align-items: center; }
.sash i { width: 10px; height: 8px; border-radius: 50%; background: #292929; }
.props { flex: 1; display: flex; flex-direction: column; background: #2e2e2e; }
.props h2 { height: 36px; }
.props p {
  margin: 0;
  height: 55px;
  padding-left: 12px;
  line-height: 53px;
  font-size: 25.600px;
  color: #e0e0e0;
}
.props .box { flex: 1; margin: 0 3px 4px 5px; background: #1e1e1e; border-bottom: 2px solid #070707; }

.rail { flex: none; display: flex; flex-direction: column; align-items: center; padding-top: 5px; }
.rail.left { width: 86px; padding-left: 12px; border-right: 1px solid #1a1a1a; }
.rail.right { width: 70px; }

.canvas { flex: none; display: block; width: 2267px; height: 1640px; background: #f5f4ef; }
.grid { fill: #b4b4b2; shape-rendering: crispEdges; }
.note { fill: none; stroke: #0000c2; stroke-width: 5; stroke-linejoin: round; }
.sym { fill: none; stroke: #840000; stroke-width: 4.700; stroke-linecap: round; stroke-linejoin: round; }
.sym .thick { stroke-width: 8; }
.sym .plate { stroke-width: 17.800; }
.sym .body { fill: #ffffc2; }
.sym .ring { stroke-width: 17.500; }
.wire { fill: none; stroke: #009600; stroke-width: 5; stroke-linecap: round; }
.dot { fill: #009600; }
.cursor { stroke: #000; stroke-width: 1; shape-rendering: crispEdges; }

.stroke text {
  font-family: "Noto Sans CJK SC", "Noto Sans", sans-serif;
  font-weight: 100;
  font-size: 66px;
  text-anchor: middle;
  stroke-width: 3;
  stroke-linejoin: round;
}
.stroke .plus { font-size: 84px; }
.ref { fill: #006464; stroke: #006464; }
.pin { fill: #a90000; stroke: #a90000; }
.note-t { fill: #0000c2; stroke: #0000c2; }

.gap { flex: none; height: 66px; border-top: 1px solid #1f1f1f; }
.status {
  flex: 1;
  display: flex;
  align-items: center;
  padding: 0 0 5px 10px;
  border-top: 2px solid #050505;
  background: #2c2c2c;
  color: #6c6c6c;
  font-size: 22px;
  white-space: pre;
}
.status span { flex: none; }
.s1 { width: 1016px; }
.s2 { width: 144px; }
.s3 { width: 314px; letter-spacing: .35px; }
.s4 { width: 502px; letter-spacing: .25px; }
.s5 { width: 362px; }
.s6 { width: 109px; }
```
FILE: grid.js
```js
// Sheet grid: 22.82px pitch, every tenth row and column is drawn heavier.
const pitch = 22.825;
let d = "";
for (let j = -5; j <= 66; j++) {
  const h = j % 10 === 0 ? 5 : 2;
  const y = Math.round(310.9 + j * pitch - h / 2);
  for (let i = -1; i <= 98; i++) {
    const w = i % 10 === 0 ? 5 : 2;
    const x = Math.round(792.9 + i * pitch - w / 2);
    d += `M${x} ${y}h${w}v${h}h${-w}z`;
  }
}
document.getElementById("grid").setAttribute("d", d);
```
